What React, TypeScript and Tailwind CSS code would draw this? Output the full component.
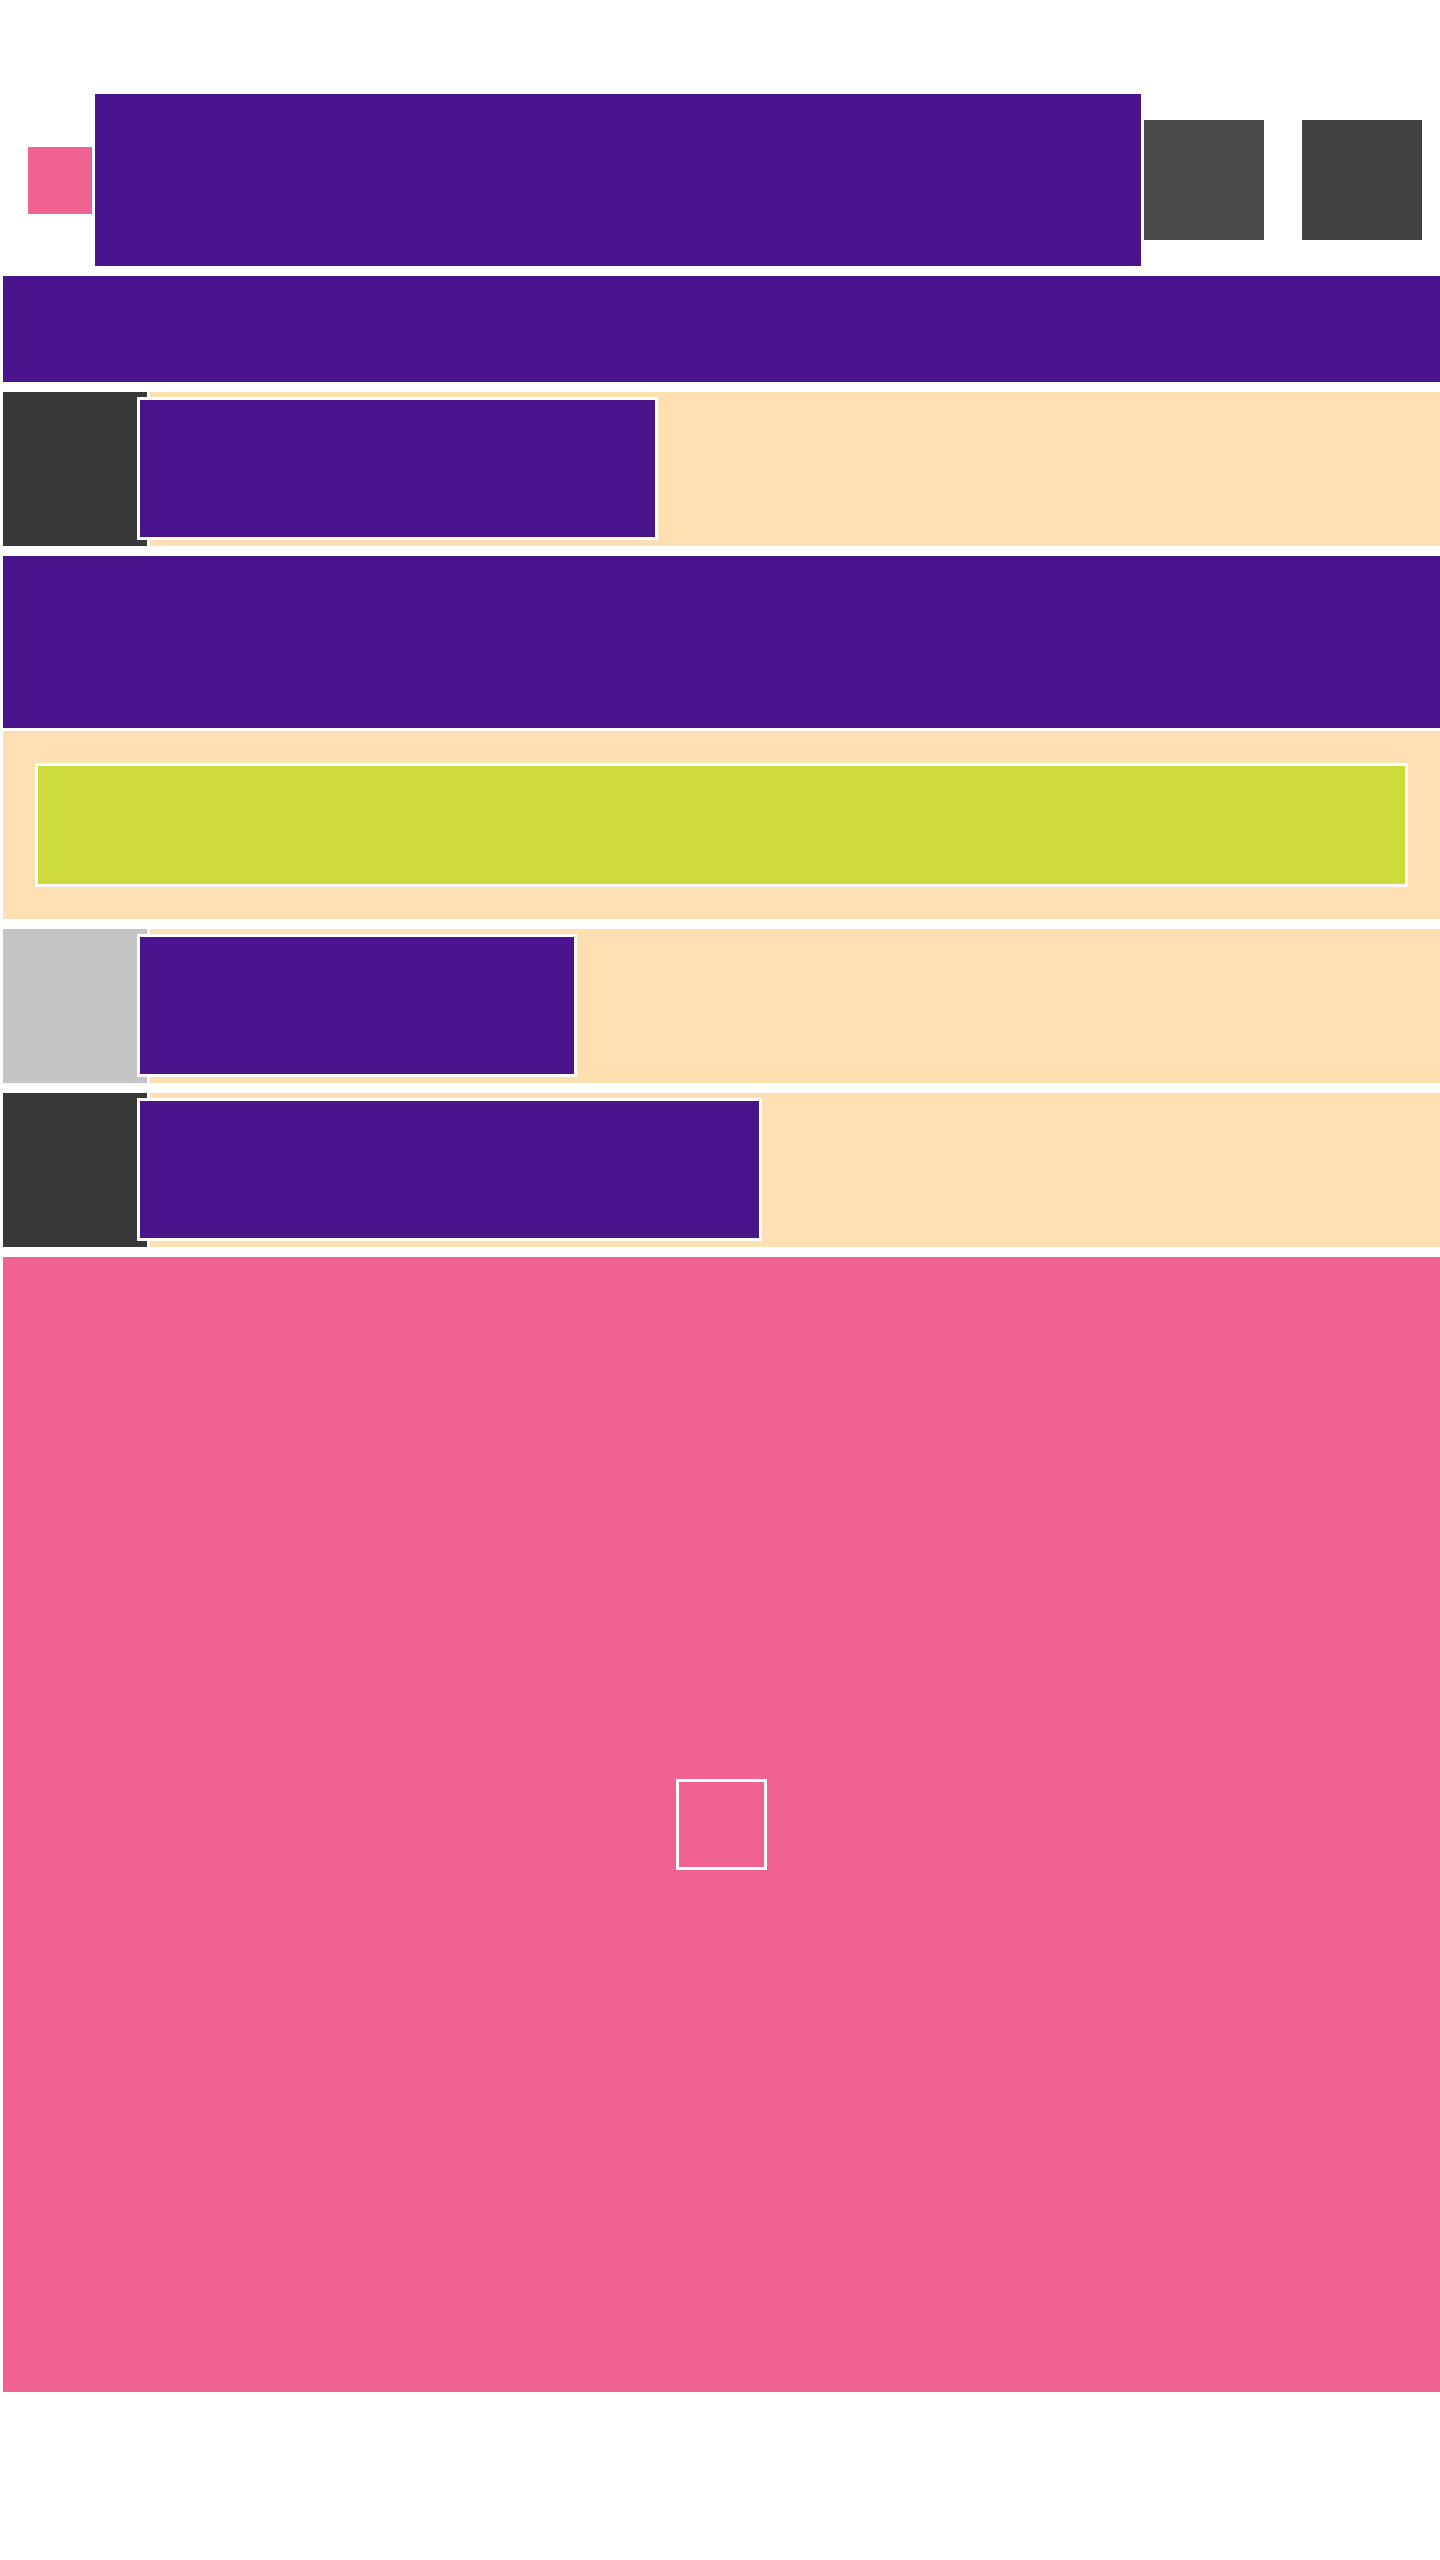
export default function App() {
  return (
    <div className="w-[1440px] min-h-[2560px] bg-white pl-[3px] pt-[94px]">
      {/* header */}
      <div className="flex items-center">
        <div className="ml-[25px] h-[67px] w-[64px] bg-[#f06292]" />
        <div className="ml-[3px] h-[172px] w-[1046px] bg-[#4a148c]" />
        <div className="ml-[3px] h-[120px] w-[120px] bg-[#4a4a4a]" />
        <div className="ml-[38px] h-[120px] w-[120px] bg-[#424242]" />
      </div>

      <div className="mt-[10px] h-[106px] bg-[#4a148c]" />

      <Row side="bg-[#393939]" boxWidth="w-[521px]" />

      <div className="mt-[10px] h-[172px] bg-[#4a148c]" />

      <div className="mt-[3px] h-[188px] bg-[#ffe0b2] px-[32px] pt-[32px]">
        <div className="h-[124px] border-[3px] border-white bg-[#cddc39]" />
      </div>

      <Row side="bg-[#c4c4c4]" boxWidth="w-[440px]" />
      <Row side="bg-[#393939]" boxWidth="w-[625px]" />

      <div className="mt-[10px] flex h-[1135px] items-center justify-center bg-[#f06292]">
        <div className="h-[91px] w-[91px] border-[3px] border-white" />
      </div>
    </div>
  )
}

function Row({ side, boxWidth }: { side: string; boxWidth: string }) {
  return (
    <div className="relative mt-[10px] flex h-[154px] gap-[3px]">
      <div className={`w-[144px] ${side}`} />
      <div className="flex-1 bg-[#ffe0b2]" />
      <div
        className={`absolute left-[134px] top-[5px] h-[143px] border-[3px] border-white bg-[#4a148c] ${boxWidth}`}
      />
    </div>
  )
}
